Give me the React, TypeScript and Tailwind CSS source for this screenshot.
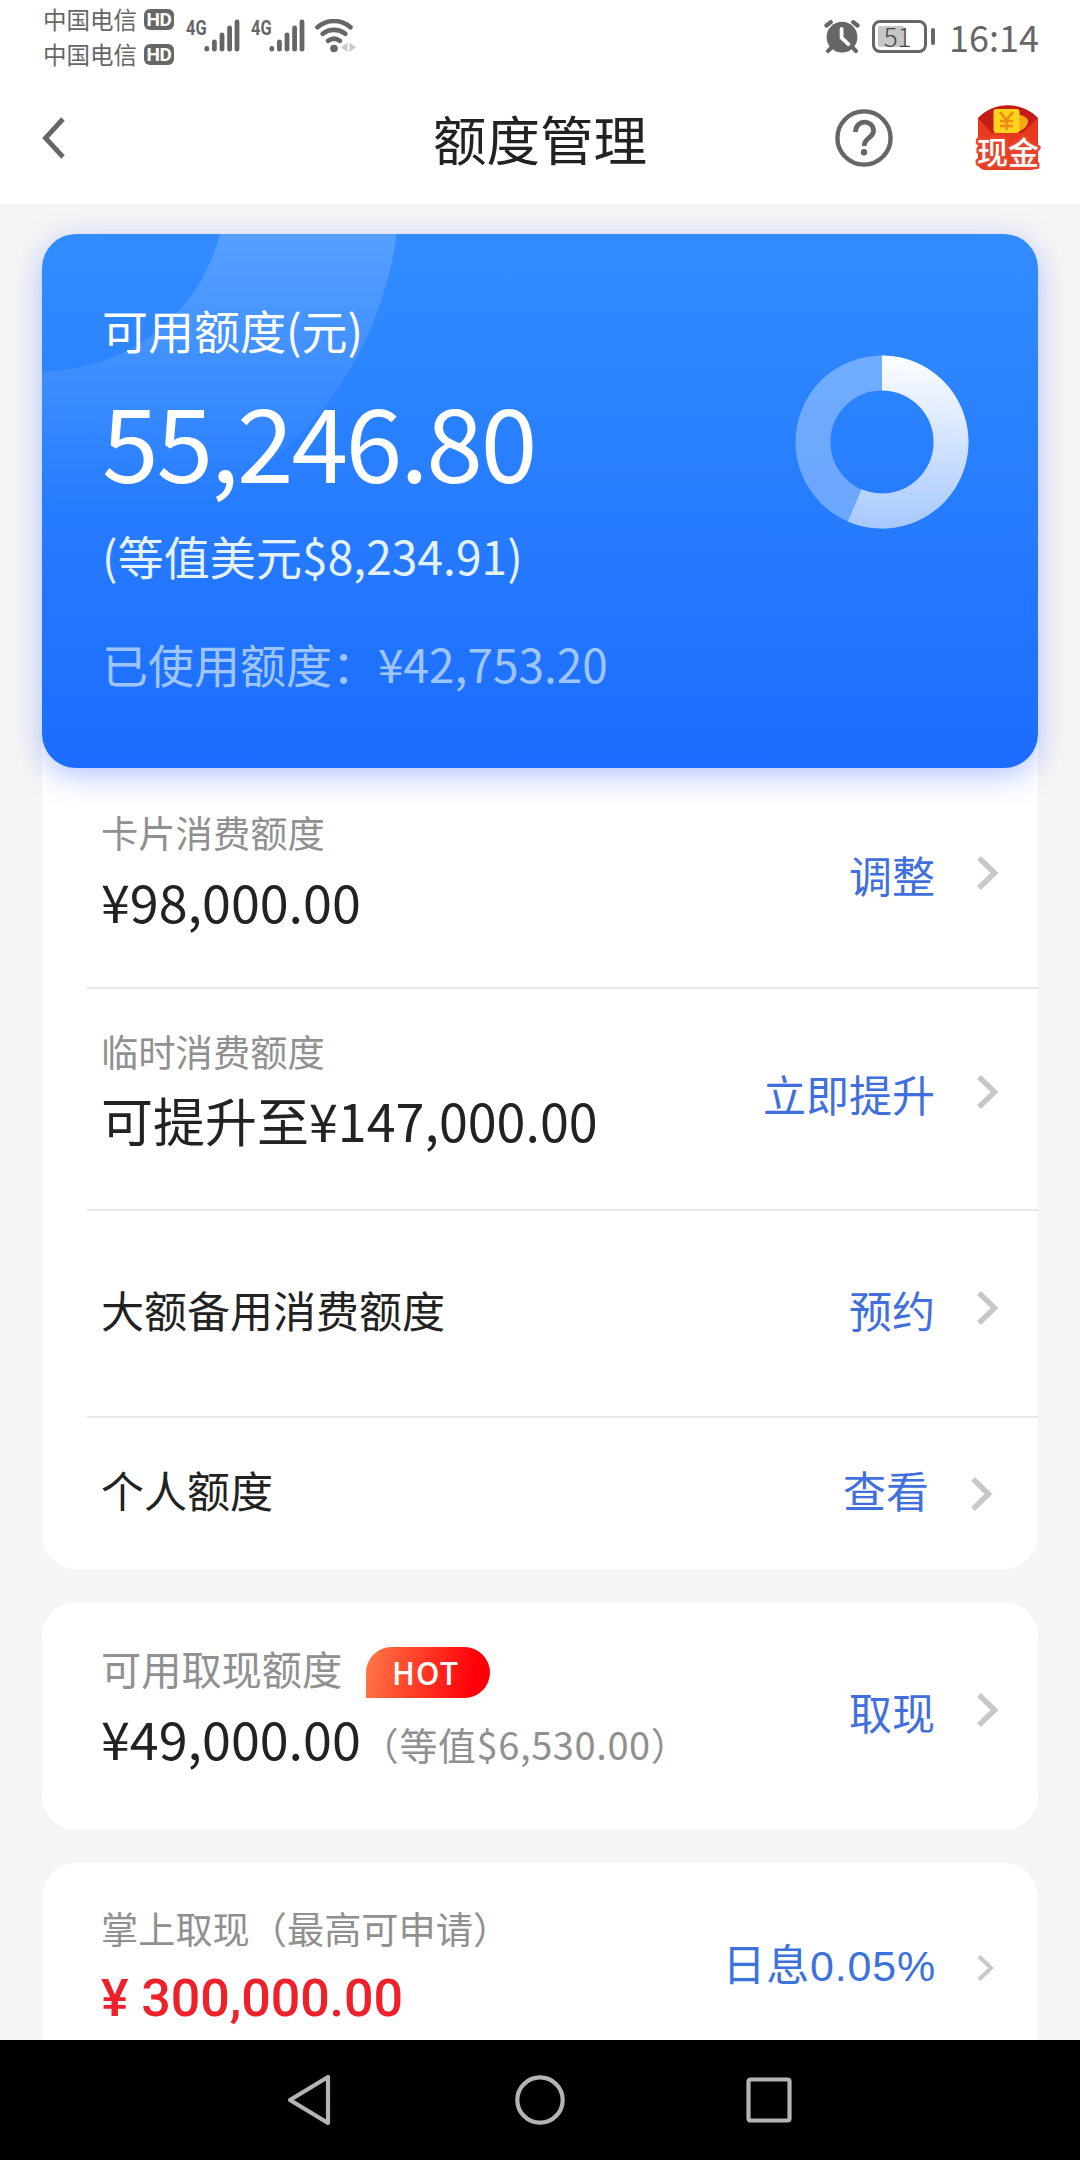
import type { ReactNode } from "react";

interface LimitRow {
  label?: string;
  value: string;
  action: string;
  rowClass: string;
  actionClass: string;
  arrowClass: string;
}

const rows: LimitRow[] = [
  {
    label: "卡片消费额度",
    value: "¥98,000.00",
    action: "调整",
    rowClass: "h-[219px] pt-[43px] border-b-2",
    actionClass: "pt-[40px] pr-[39px]",
    arrowClass: "mt-[3px]",
  },
  {
    label: "临时消费额度",
    value: "可提升至¥147,000.00",
    action: "立即提升",
    rowClass: "h-[222px] pt-[43px] border-b-2",
    actionClass: "pt-[40px] pr-[39px]",
    arrowClass: "mt-[3px]",
  },
  {
    value: "大额备用消费额度",
    action: "预约",
    rowClass: "h-[207px] pt-[77px] border-b-2",
    actionClass: "pr-[39px]",
    arrowClass: "mt-[3px]",
  },
  {
    value: "个人额度",
    action: "查看",
    rowClass: "h-[151px] pt-[50px]",
    actionClass: "pr-[45px]",
    arrowClass: "mt-[9px]",
  },
];

const Arrow = ({ className }: { className?: string }) => (
  <svg className={className} width="22" height="34" viewBox="0 0 22 34" fill="none">
    <path d="M2 2L17.5 17L2 32" stroke="#c8c8ca" strokeWidth="5.5" />
  </svg>
);

const Action = ({
  text,
  className,
  children,
}: {
  text: string;
  className?: string;
  children: ReactNode;
}) => (
  <div className={`flex items-start gap-[42px] ${className ?? ""}`}>
    <span className="text-[43px] leading-none text-[#416fdd]">{text}</span>
    {children}
  </div>
);

const HdBadge = () => (
  <span className="flex h-[21px] w-[30px] items-center justify-center rounded-[6px] bg-[#666] font-['Roboto'] text-[19px] leading-none font-bold tracking-[-0.5px] text-white">
    HD
  </span>
);

const Signal = () => (
  <div className="flex items-start">
    <span className="-mt-px w-[18px] origin-left scale-x-[0.78] font-['Roboto'] text-[21px] leading-none font-bold text-[#666]">
      4G
    </span>
    <svg width="36" height="34" viewBox="0 0 36 34" stroke="#666" strokeWidth="4.8" strokeLinecap="round">
      <path d="M2.8 29.4V30.2M10.4 22.8V30.2M18 16V30.2M25.6 9V30.2M33 3V30.2" />
    </svg>
  </div>
);

const StatusBar = () => (
  <div className="flex h-[74px] items-start pl-[43px] text-[#666]">
    <div className="flex w-[143px] flex-col gap-[12px] pt-[8px]">
      <div className="flex items-center gap-[7px]">
        <span className="text-[23.5px] leading-[23px]">中国电信</span>
        <HdBadge />
      </div>
      <div className="flex items-center gap-[7px]">
        <span className="text-[23.5px] leading-[23px]">中国电信</span>
        <HdBadge />
      </div>
    </div>
    <div className="flex gap-[11px] pt-[19px]">
      <Signal />
      <Signal />
      <svg className="-ml-px" width="42" height="34" viewBox="0 0 42 34" fill="none">
        <g stroke="#666" strokeWidth="4.6" strokeLinecap="round">
          <path d="M2.5 8.2C12 0 26 0 35.5 8.2" />
          <path d="M7.6 14.8C14.4 9.6 23.6 9.6 30.4 14.8" />
          <path d="M13 21.8C16.8 19 21.2 19 25 21.8" />
        </g>
        <circle cx="19" cy="29.5" r="3.8" fill="#666" />
        <path d="M32.5 23.5V33L26 28.3ZM34.5 23.5V33L41 28.3Z" fill="#c9c9c9" />
      </svg>
    </div>
    <div className="ml-auto flex items-start pr-[41px]">
      <svg className="mt-[20px]" width="36" height="34" viewBox="0 0 36 34" fill="none">
        <circle cx="18" cy="17.2" r="15.4" fill="#666" />
        <path d="M2.5 5.5L6.8 2.2M33.5 5.5L29.2 2.2" stroke="#666" strokeWidth="4.2" strokeLinecap="round" />
        <path d="M7.5 27.5L4 31M28.5 27.5L32 31" stroke="#666" strokeWidth="4" strokeLinecap="round" />
        <path d="M17.6 9V17.8L24.4 24.2" stroke="#fff" strokeWidth="3.8" strokeLinecap="round" strokeLinejoin="round" />
      </svg>
      <div className="mt-[20px] ml-[12px] flex items-center gap-[4px]">
        <div className="relative flex h-[33px] w-[55px] items-center justify-center rounded-[8px] border-[3.5px] border-[#666]">
          <div className="absolute top-[3px] bottom-[3px] left-[3px] w-[26px] rounded-[2px] bg-[#c6c6c6]" />
          <span className="relative -mt-[2px] -ml-[4px] text-[26px] leading-none font-light text-[#444]">51</span>
        </div>
        <div className="h-[17px] w-[4px] rounded-full bg-[#666]" />
      </div>
      <span className="mt-[18px] ml-[14px] text-[36px] leading-none">16:14</span>
    </div>
  </div>
);

const CashIcon = () => (
  <svg className="overflow-visible" width="68" height="68" viewBox="0 0 68 68">
    <path d="M4 14C20-3 47-3 64 14V38H4Z" fill="#c41c16" />
    <path d="M4 14L18 29H48L64 14V58Q64 66 56 66H12Q4 66 4 58Z" fill="#e63a1e" />
    <path d="M44 10Q55 13 54 18Q53 25 43 28Z" fill="#f6a80f" />
    <rect x="19.5" y="5" width="26" height="24" rx="3" fill="#ffd21c" />
    <path d="M26 8L32.5 16L39 8M32.5 16V26M26 17H39M26 22H39" stroke="#f08a12" strokeWidth="2.6" fill="none" />
    <text
      x="34"
      y="60"
      textAnchor="middle"
      fontSize="31"
      fontWeight="500"
      fill="#fff"
      stroke="#e8452c"
      strokeWidth="5"
      strokeLinejoin="round"
      paintOrder="stroke"
    >
      现金
    </text>
  </svg>
);

const Header = () => (
  <div className="relative flex h-[130px] items-start justify-center">
    <svg className="absolute top-[43px] left-[41px]" width="24" height="42" viewBox="0 0 24 42" fill="none">
      <path d="M22 2L4.5 21L22 40" stroke="#666" strokeWidth="4.8" />
    </svg>
    <h1 className="mt-[37px] text-[53.5px] leading-none text-[#222]">额度管理</h1>
    <div className="absolute top-[30px] right-[38px] flex items-center gap-[80px]">
      <svg width="60" height="68" viewBox="0 0 60 68" fill="none">
        <circle cx="30" cy="34" r="26.6" stroke="#666" strokeWidth="4.4" />
        <path d="M21.5 28C21.5 15 39.5 15 39.5 27C39.5 34 30.2 33.5 30.2 42" stroke="#666" strokeWidth="4.8" />
        <circle cx="30" cy="48.2" r="3.2" fill="#666" />
      </svg>
      <CashIcon />
    </div>
  </div>
);

const UsageRing = () => (
  <svg width="176" height="176" viewBox="0 0 176 176" fill="none">
    <defs>
      <linearGradient id="used" gradientUnits="userSpaceOnUse" x1="88" y1="0" x2="88" y2="176">
        <stop offset="0" stopColor="#fff" />
        <stop offset="1" stopColor="#a6c8ff" />
      </linearGradient>
    </defs>
    <circle cx="88" cy="88" r="69" stroke="#fff" strokeOpacity="0.32" strokeWidth="35" />
    <path d="M88 1.5A86.5 86.5 0 1 1 53.8 167.45L67.67 135.23A51.5 51.5 0 1 0 88 36.5Z" fill="url(#used)" />
  </svg>
);

const BalanceCard = () => (
  <div className="relative z-10 flex h-[534px] justify-between overflow-hidden rounded-[34px] bg-linear-to-b from-[#338cff] to-[#1c6cff] pr-[68px] pl-[60px] text-white">
    <svg className="absolute top-0 left-0" width="400" height="330" viewBox="0 0 400 330" fill="none">
      <defs>
        <linearGradient id="arc" gradientUnits="userSpaceOnUse" x1="0" y1="0" x2="0" y2="270">
          <stop offset="0" stopColor="#fff" stopOpacity="0.17" />
          <stop offset="1" stopColor="#fff" stopOpacity="0" />
        </linearGradient>
      </defs>
      <circle cx="0" cy="-46.5" r="270.8" stroke="url(#arc)" strokeWidth="173.6" />
    </svg>
    <div className="relative">
      <p className="mt-[72px] text-[46px] leading-none">可用额度(元)</p>
      <p className="mt-[36px] text-[102px] leading-none tracking-[-2.2px]">55,246.80</p>
      <p className="mt-[42px] text-[46px] leading-none tracking-[0.1px] text-[#e4f2ff]">(等值美元$8,234.91)</p>
      <p className="mt-[62px] text-[46px] leading-none text-[#9fc5ff]">
        已使用额度<span className="inline-block w-[46px]">：</span>¥42,753.20
      </p>
    </div>
    <div className="relative mt-[120px]">
      <UsageRing />
    </div>
  </div>
);

const App = () => {
  return (
    <div className="flex h-[2160px] w-[1080px] flex-col overflow-hidden bg-[#f5f5f5] font-['Noto_Sans_CJK_SC',sans-serif]">
      <div className="h-[204px] shrink-0 bg-white">
        <StatusBar />
        <Header />
      </div>

      <div className="flex grow flex-col overflow-hidden px-[42px] pt-[30px]">
        <div className="relative z-10 rounded-[34px] shadow-[0_8px_30px_rgba(70,110,255,0.4)]">
          <BalanceCard />
        </div>

        {/* LIMITS */}
        <div className="-mt-[40px] shrink-0 rounded-b-[34px] bg-white pt-[42px]">
          {rows.map((row) => (
            <div
              key={row.value}
              className={`ml-[45px] flex justify-between border-[#e8e8e8] pl-[14px] ${row.rowClass}`}
            >
              <div>
                {row.label ? (
                  <>
                    <p className="text-[37.3px] leading-[38px] text-[#909090]">{row.label}</p>
                    <p className="mt-[24px] text-[52px] leading-none text-[#222]">{row.value}</p>
                  </>
                ) : (
                  <p className="text-[43px] leading-none text-[#222]">{row.value}</p>
                )}
              </div>
              <Action text={row.action} className={row.actionClass}>
                <Arrow className={row.arrowClass} />
              </Action>
            </div>
          ))}
        </div>

        {/* CASH ADVANCE */}
        <div className="mt-[33px] flex h-[228px] shrink-0 justify-between rounded-[34px] bg-white pl-[59px]">
          <div className="pt-[45px]">
            <div className="flex items-start gap-[24px]">
              <p className="text-[40.2px] leading-[42px] text-[#909090]">可用取现额度</p>
              <span className="flex h-[51px] w-[124px] items-center justify-center rounded-[26px] rounded-bl-none bg-linear-[100deg] from-[#ff7a48] to-[#ff0008] to-85% pr-[5px] pb-[2px] text-[31px] leading-none font-medium tracking-[1px] text-white">
                HOT
              </span>
            </div>
            <p className="mt-[14px] flex items-baseline text-[52px] leading-none text-[#222]">
              ¥49,000.00
              <span className="text-[38px] leading-none tracking-[0.6px] text-[#909090]">（等值$6,530.00）</span>
            </p>
          </div>
          <Action text="取现" className="pt-[88px] pr-[39px]">
            <Arrow className="mt-[3px]" />
          </Action>
        </div>

        {/* MOBILE LOAN */}
        <div className="mt-[33px] flex h-[260px] shrink-0 justify-between rounded-[34px] bg-white pl-[59px]">
          <div className="pt-[46px]">
            <p className="text-[37.2px] leading-[38px] text-[#909090]">掌上取现（最高可申请）</p>
            <p className="mt-[26px] font-['Roboto'] text-[52px] leading-none font-medium tracking-[-0.1px] text-[#ee2029]">
              ¥ 300,000.00
            </p>
          </div>
          <div className="flex items-start gap-[41px] pt-[82px] pr-[43px]">
            <span className="font-['Liberation_Sans','Noto_Sans_CJK_SC',sans-serif] text-[43px] leading-none tracking-[0.8px] text-[#3c72dc]">
              日息0.05%
            </span>
            <svg className="mt-[10px]" width="18" height="26" viewBox="0 0 18 26" fill="none">
              <path d="M2 1.5L14 13L2 24.5" stroke="#c8c8ca" strokeWidth="4" />
            </svg>
          </div>
        </div>
      </div>

      {/* NAV BAR */}
      <div className="flex h-[120px] shrink-0 items-center justify-between bg-black px-[286px]">
        <svg width="48" height="56" viewBox="0 0 48 56" fill="none" stroke="#b4b4b4" strokeWidth="4.2" strokeLinejoin="round">
          <path d="M42 5V51L4 28Z" />
        </svg>
        <svg width="56" height="56" viewBox="0 0 56 56" fill="none" stroke="#b4b4b4" strokeWidth="4.2">
          <circle cx="28" cy="28" r="22.7" />
        </svg>
        <svg width="48" height="56" viewBox="0 0 48 56" fill="none" stroke="#b4b4b4" strokeWidth="4.2">
          <rect x="2.5" y="7.5" width="41" height="41" rx="2" />
        </svg>
      </div>
    </div>
  );
};

export default App;
